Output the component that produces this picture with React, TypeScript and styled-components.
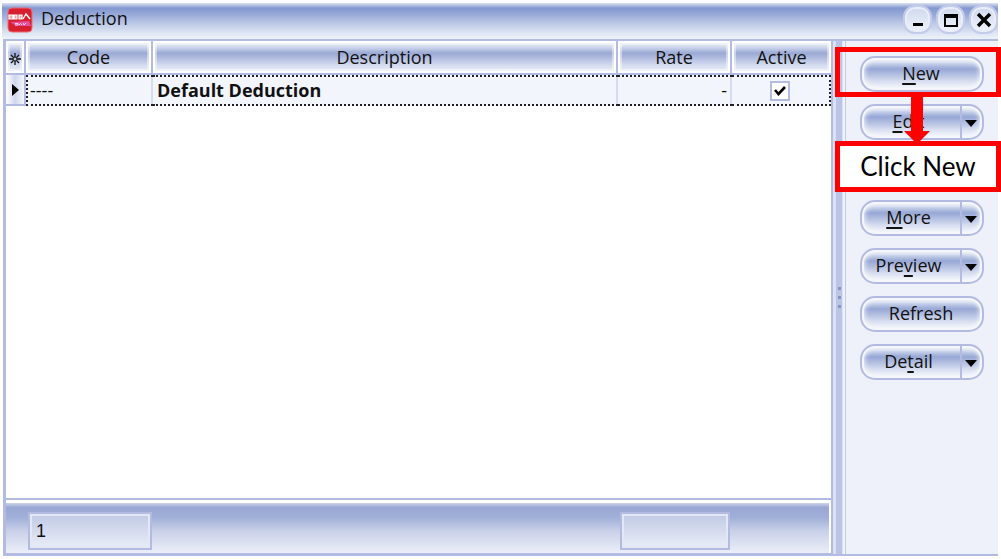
import React from "react";
import styled, { createGlobalStyle, css } from "styled-components";

const line = "#b3bbe3";
const cellFill = "linear-gradient(#eef1f9 0, #d3dbee 18%, #9aa9d5 38%, #b5c0e1 56%, #d5dcef 76%, #eef1f9 100%)";

const GlobalStyle = createGlobalStyle`
  * { box-sizing: border-box; }
  body {
    margin: 0;
    background: #fff;
    color: #111;
    font: 18px/24px "Open Sans", "Noto Sans", sans-serif;
  }
  button, input { font: inherit; color: inherit; }
`;

const Page = styled.div`
  position: relative;
  min-height: 100vh;
  display: flex;
  flex-direction: column;
  padding: 3px 3px 3px 2px;
`;

const TitleBar = styled.header`
  height: 36px;
  display: flex;
  align-items: center;
  gap: 8px;
  padding: 0 0 3px 5px;
  background: linear-gradient(#dce2f2 0, #8398cf 14%, #93a5d6 28%, #bac6e5 55%, #dfe7f3 85%, #edf3f9 100%);
`;

const Title = styled.h1`
  flex: 1;
  margin: 0;
  padding-bottom: 4px;
  font-size: 18px;
  font-weight: 400;
  line-height: 24px;
`;

const WindowButtons = styled.div`
  display: flex;
  gap: 4px;
`;

const WindowButton = styled.button`
  width: 29px;
  height: 29px;
  display: grid;
  place-items: center;
  padding: 0;
  border: 2px solid #c3cbea;
  border-radius: 12px;
  background: linear-gradient(#ced8ee, #f1f4fb);
  box-shadow: inset 0 0 0 2px #e9eef8;
`;

const Body = styled.div`
  flex: 1;
  display: flex;
  margin-left: 1px;
  border-top: 2px solid ${line};
  border-bottom: 2px solid ${line};
`;

const GridPanel = styled.main`
  flex: 1;
  display: flex;
  flex-direction: column;
  border: solid ${line};
  border-width: 0 2px 1px 3px;
`;

const Records = styled.table`
  width: 100%;
  table-layout: fixed;
  border-collapse: separate;
  border-spacing: 0;
`;

const HeadCell = styled.th<{ $w?: number }>`
  ${(p) => p.$w && css`width: ${p.$w}px;`}
  height: 34px;
  padding: 0;
  font-weight: 400;
  border: solid ${line};
  border-width: 0 2px 2px 0;
  background: ${cellFill};
  box-shadow: inset 0 0 0 2px #fff, inset 0 0 0 4px rgba(255, 255, 255, 0.45);
  svg { display: block; margin: 4px auto 0; }
  &:last-child { border-right-width: 0; }
`;

const Cell = styled.td<{ $align?: string; $bold?: boolean }>`
  height: 31px;
  padding: 0 5px 2px 4px;
  background: #f2f5fb;
  font-weight: ${(p) => (p.$bold ? 700 : 400)};
  text-align: ${(p) => p.$align ?? "left"};
  border: dotted #222;
  border-width: 2px 0;
  box-shadow: inset -2px 0 0 #d5dcf1;
  &:nth-child(2) { border-left-width: 2px; padding-left: 2px; }
  &:last-child { border-right-width: 2px; box-shadow: none; }
`;

const MarkCell = styled.td`
  padding: 0;
  border: solid ${line};
  border-width: 0 2px 2px 0;
  background: linear-gradient(90deg, #fff, #cfd7ed 50%, #f5f7fc);
  svg { display: block; margin: 0 auto; }
`;

const Check = styled.input`
  appearance: none;
  display: block;
  width: 20px;
  height: 20px;
  margin: 2px auto 0;
  border: 2px solid ${line};
  background: #fff;
  &:checked {
    background: #fff url("data:image/svg+xml,%3Csvg xmlns='http://www.w3.org/2000/svg' viewBox='0 0 16 16'%3E%3Cpath d='M3 7l3.5 4L13 4' fill='none' stroke='%23000' stroke-width='2.6'/%3E%3C/svg%3E") center / 16px 16px;
  }
`;

const Footer = styled.footer`
  margin-top: auto;
  height: 55px;
  border-top: 2px solid ${line};
  padding: 3px 2px 0 0;
  background: #fff;
`;

const FooterFill = styled.div`
  height: 50px;
  display: flex;
  align-items: center;
  justify-content: space-between;
  padding: 6px 99px 0 22px;
  background: linear-gradient(#ced5ea 0, #99a8d4 9%, #a1b0d8 30%, #c8d0e8 55%, #eceff8 100%);
`;

const Total = styled.output<{ $w: number }>`
  width: ${(p) => p.$w}px;
  height: 38px;
  padding: 4px 6px;
  font-family: "Liberation Sans", Arial, sans-serif;
  line-height: 26px;
  border: 2px solid ${line};
  background: linear-gradient(#c0cae4, #eaedf8);
  box-shadow: inset 0 0 0 2px #e4e8f5;
`;

const Splitter = styled.div`
  width: 13px;
  display: flex;
  flex-direction: column;
  align-items: center;
  justify-content: center;
  gap: 6px;
  border: solid #c3cbea;
  border-width: 0 1px 0 0;
  box-shadow: inset -2px 0 0 #f0f3fb;
  background: linear-gradient(90deg, #dbe1f3 0 3px, #bac4e4 3px 9px, #dbe1f3 9px);
`;

const Grip = styled.span`
  width: 3px;
  height: 3px;
  background: #8793cc;
`;

const Side = styled.aside`
  width: 152px;
  display: flex;
  flex-direction: column;
  gap: 12px;
  padding: 15px 14px;
  background: #eef1fa;
`;

const Slot = styled.div`
  height: 36px;
`;

const Pill = styled.div`
  height: 36px;
  display: flex;
  border: 2px solid ${line};
  border-radius: 15px;
  overflow: hidden;
  background: linear-gradient(#f1f4fb 0, #cfd8ed 14%, #97a7d5 34%, #b3bfe1 52%, #dbe1f1 75%, #f7f8fd 100%);
  box-shadow: inset 0 0 0 2px #f4f6fc, inset 0 0 4px 3px rgba(246, 248, 253, 0.8);
`;

const Action = styled.button<{ $split?: boolean }>`
  flex: 1;
  padding: 0 ${(p) => (p.$split ? 5 : 2)}px 3px 0;
  border: 0;
  background: none;
  u { text-underline-offset: 3px; text-decoration-thickness: 2px; }
`;

const Drop = styled.button`
  width: 22px;
  padding: 3px 3px 0 0;
  border: 0;
  border-left: 2px solid ${line};
  background: none;
  svg { display: block; margin: 0 auto; }
`;

const Highlight = styled.div`
  position: absolute;
  top: 47px;
  right: 0;
  width: 166px;
  height: 50px;
  border: 5px solid #f00;
  pointer-events: none;
`;

const Callout = styled.div`
  position: absolute;
  top: 141px;
  right: 0;
  width: 166px;
  height: 51px;
  border: 5px solid #f00;
  background: #fff;
  color: #000;
  font: 26px/41px Lato, "Open Sans", sans-serif;
  text-align: center;
`;

const Arrow = styled.svg`
  position: absolute;
  top: 96px;
  right: 70px;
`;

function Logo() {
  return (
    <svg width="26" height="26" viewBox="0 0 26 26" aria-hidden="true">
      <rect x="1" y="1" width="24" height="24" rx="4" fill="#d6202f" stroke="#ec6b76" />
      <path d="M2 8h4v4H2zM7 8h3v4H7zM12 8h3v4h-3z" fill="#e8a5ac" stroke="#fff" strokeWidth="1.2" />
      <path d="M16 12l3-5 4 5" fill="none" stroke="#fff" strokeWidth="1.4" />
      <path d="M3 15l19-1 2 5H9z" fill="#ea4d9a" />
      <path d="M8 16.500h3v1.500H8M12 18l1.500-1.500L15 18M16 16l1 2 2-2" fill="none" stroke="#ffd3ea" strokeWidth="1" />
    </svg>
  );
}

type ItemProps = { before?: string; mark?: string; after?: string; drop?: boolean };

function MenuButton({ before, mark, after, drop }: ItemProps) {
  return (
    <Pill>
      <Action type="button" $split={drop}>
        {before}
        {mark && <u>{mark}</u>}
        {after}
      </Action>
      {drop && (
        <Drop type="button" aria-label={`${before ?? ""}${mark ?? ""}${after ?? ""} options`}>
          <svg width="12" height="7" viewBox="0 0 12 7">
            <path d="M0 0h12L6 7z" fill="#000" />
          </svg>
        </Drop>
      )}
    </Pill>
  );
}

export default function App() {
  return (
    <Page>
      <GlobalStyle />
      <TitleBar>
        <Logo />
        <Title>Deduction</Title>
        <WindowButtons>
          <WindowButton type="button" aria-label="Minimize">
            <svg width="18" height="18"><path d="M4 13.5h10" stroke="#000" strokeWidth="3" /></svg>
          </WindowButton>
          <WindowButton type="button" aria-label="Maximize">
            <svg width="18" height="18">
              <path d="M3 4h12v11H3z" fill="none" stroke="#000" strokeWidth="2" />
              <path d="M2 5h14" stroke="#000" strokeWidth="4" />
            </svg>
          </WindowButton>
          <WindowButton type="button" aria-label="Close">
            <svg width="18" height="18"><path d="M3 3l12 12M15 3L3 15" stroke="#000" strokeWidth="3.4" /></svg>
          </WindowButton>
        </WindowButtons>
      </TitleBar>
      <Body>
        <GridPanel>
          <Records>
            <thead>
              <tr>
                <HeadCell $w={20} aria-label="Row marker">
                  <svg width="12" height="12" viewBox="0 0 12 12">
                    <path d="M6 0v4M6 8v4M0 6h4M8 6h4M2 2l2.500 2.500M7.500 7.500L10 10M10 2L7.500 4.500M4.500 7.500L2 10" stroke="#111" strokeWidth="1.300" />
                    <circle cx="6" cy="6" r="2" fill="none" stroke="#111" />
                  </svg>
                </HeadCell>
                <HeadCell $w={127}>Code</HeadCell>
                <HeadCell>Description</HeadCell>
                <HeadCell $w={114}>Rate</HeadCell>
                <HeadCell $w={99}>Active</HeadCell>
              </tr>
            </thead>
            <tbody>
              <tr>
                <MarkCell>
                  <svg width="7" height="12" viewBox="0 0 7 12">
                    <path d="M0 0l7 6-7 6z" fill="#000" />
                  </svg>
                </MarkCell>
                <Cell>----</Cell>
                <Cell $bold>Default Deduction</Cell>
                <Cell $align="right">-</Cell>
                <Cell>
                  <Check type="checkbox" defaultChecked aria-label="Active" />
                </Cell>
              </tr>
            </tbody>
          </Records>
          <Footer>
            <FooterFill>
              <Total $w={124}>1</Total>
              <Total $w={110} />
            </FooterFill>
          </Footer>
        </GridPanel>
        <Splitter>
          <Grip />
          <Grip />
          <Grip />
        </Splitter>
        <Side>
          <MenuButton mark="N" after="ew" />
          <MenuButton mark="E" after="dit" drop />
          <Slot />
          <MenuButton mark="M" after="ore" drop />
          <MenuButton before="Pre" mark="v" after="iew" drop />
          <MenuButton before="Refresh" />
          <MenuButton before="De" mark="t" after="ail" drop />
        </Side>
      </Body>
      <Highlight />
      <Callout>Click New</Callout>
      <Arrow width="28" height="49" viewBox="0 0 28 49">
        <path d="M8 0h12v35h7L14 48 1 35h7z" fill="#f00" />
      </Arrow>
    </Page>
  );
}
